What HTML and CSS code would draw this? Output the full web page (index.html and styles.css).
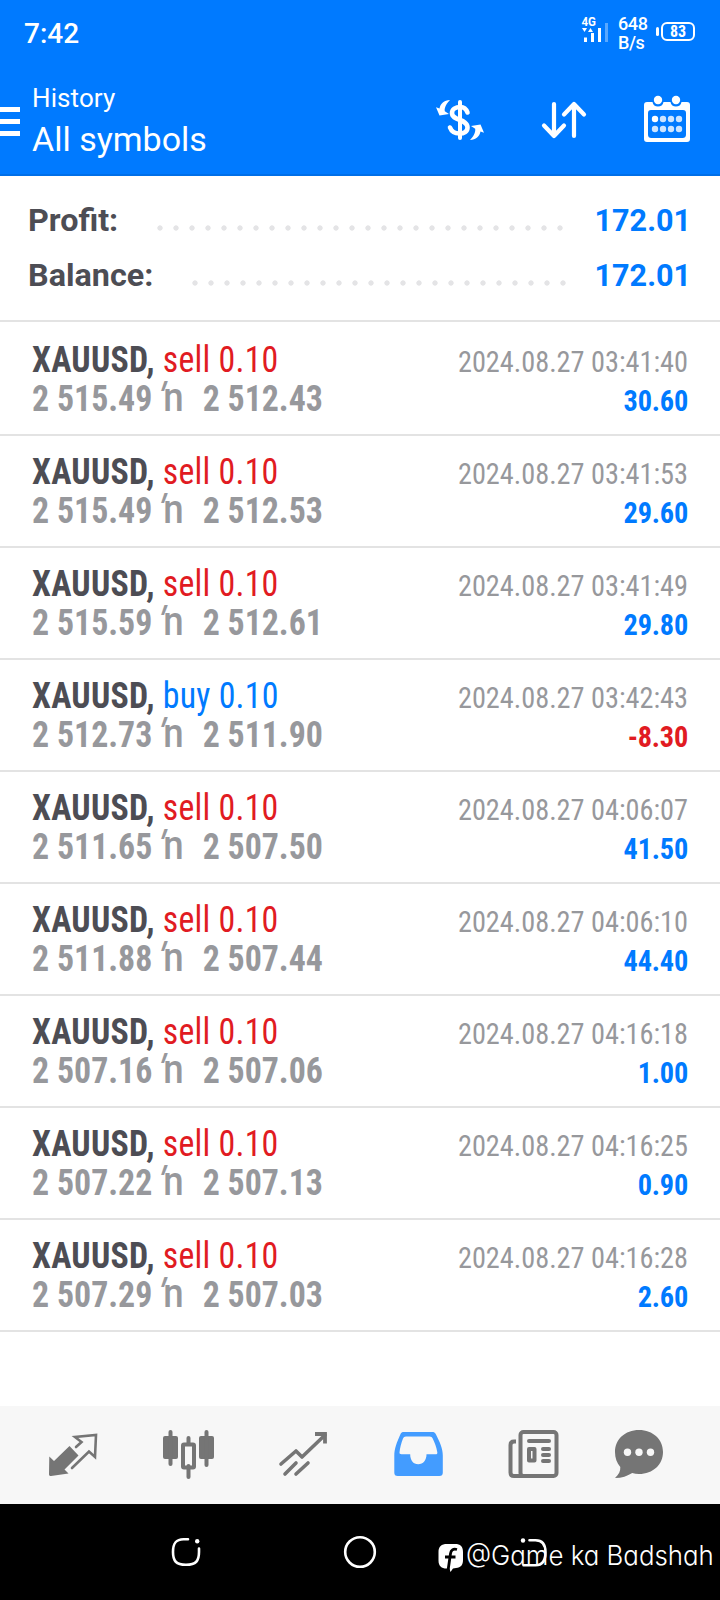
FILE: index.html
```html
<!DOCTYPE html>
<html lang="en">
<head>
<meta charset="utf-8">
<title>History</title>
<link rel="stylesheet" href="styles.css">
</head>
<body>
<div class="phone">
  <header class="top">
    <div class="status">
      <span class="clock">7:42</span>
      <svg class="signal" width="28" height="28" viewBox="0 -2 28 28">
        <text x="-.5" y="7.500" class="net" textLength="14.500" lengthAdjust="spacingAndGlyphs">4G</text>
        <path fill="#fff" d="M0 10h5l-2.500 4zM6 14h5L8.500 10zM2 19.500h3v4.500H2zM9 15h3v9H9zM16 10h3v14h-3z"/>
        <path fill="#fff" opacity=".35" d="M23 5h3v19h-3z"/>
      </svg>
      <div class="speed"><span>648</span><span>B/s</span></div>
      <div class="battery"><i></i><b>83</b></div>
    </div>
    <div class="bar">
      <div class="menu"><i></i><i></i><i></i></div>
      <div class="titles"><span class="small">History</span><span class="big">All symbols</span></div>
      <svg class="actions" width="300" height="60" viewBox="420 90 300 60" fill="none" stroke="#fff" stroke-linecap="round" stroke-linejoin="round">
        <path stroke-width="4" d="M460 102v36"/>
        <path stroke-width="4.600" d="M467.500 112.500c-1.500-4-4-5.500-7-5.500-5 0-8.500 2.200-8.500 6 0 8 15.500 5.500 15.500 14.500 0 4-3.500 6-8 6-5 0-8-2-9.500-6"/>
        <path fill="#fff" stroke="none" d="M450 100c-6 .3-9.500 3.500-10.500 8.500l-3.500-1.300 3.500 8.300 9.500-1.500-4.200-2.700c-.6-4 2.200-8.300 5.200-11.300zM470 140c6-.3 9.500-3.500 10.500-8.500l3.500 1.300-3.500-8.300-9.500 1.500 4.200 2.700c.6 4-2.200 8.300-5.200 11.300z"/>
        <path stroke-width="4.200" d="M554 104v32M544 125.500l10 10.500 10-10.500M574 136v-32M564 114.500l10-10.500 10 10.500"/>
        <path fill="#fff" stroke="none" fill-rule="evenodd" d="M647 102h5.500c.5 3 2.600 4.600 5.500 4.600s5-1.600 5.500-4.600h7c.5 3 2.600 4.600 5.500 4.600s5-1.600 5.500-4.600h5.500c2 0 3 1 3 3v34c0 2-1 3-3 3h-40c-2 0-3-1-3-3v-34c0-2 1-3 3-3zM651 110c-2 0-3 1-3 3v21c0 3 1 4 4 4h30c3 0 4-1 4-4v-21c0-2-1-3-3-3z"/>
        <g fill="#fff" stroke="none"><circle cx="658" cy="100" r="4.200"/><circle cx="676" cy="100" r="4.200"/><circle cx="655" cy="119" r="3.200"/></g>
        <g fill="#fff" stroke="none" opacity=".8"><circle cx="663" cy="119" r="3.200"/><circle cx="671" cy="119" r="3.200"/><circle cx="679" cy="119" r="3.200"/><circle cx="655" cy="129" r="3.200"/><circle cx="663" cy="129" r="3.200"/><circle cx="671" cy="129" r="3.200"/><circle cx="679" cy="129" r="3.200"/></g>
      </svg>
    </div>
  </header>

  <section class="summary">
    <div class="sum"><span class="profit-label">Profit:</span><i class="dots profit"></i><b>172.01</b></div>
    <div class="sum"><span class="balance-label">Balance:</span><i class="dots balance"></i><b>172.01</b></div>
  </section>

  <main class="list">
    <div class="row"><div class="left"><p class="deal"><b>XAUUSD,</b> <span class="sell">sell 0.10</span></p><p class="prices"><b>2 515.49</b><i><em>'</em>n</i><b>2 512.43</b></p></div><div class="right"><time>2024.08.27 03:41:40</time><b>30.60</b></div></div>
    <div class="row"><div class="left"><p class="deal"><b>XAUUSD,</b> <span class="sell">sell 0.10</span></p><p class="prices"><b>2 515.49</b><i><em>'</em>n</i><b>2 512.53</b></p></div><div class="right"><time>2024.08.27 03:41:53</time><b>29.60</b></div></div>
    <div class="row"><div class="left"><p class="deal"><b>XAUUSD,</b> <span class="sell">sell 0.10</span></p><p class="prices"><b>2 515.59</b><i><em>'</em>n</i><b>2 512.61</b></p></div><div class="right"><time>2024.08.27 03:41:49</time><b>29.80</b></div></div>
    <div class="row"><div class="left"><p class="deal"><b>XAUUSD,</b> <span class="buy">buy 0.10</span></p><p class="prices"><b>2 512.73</b><i><em>'</em>n</i><b>2 511.90</b></p></div><div class="right"><time>2024.08.27 03:42:43</time><b class="loss">-8.30</b></div></div>
    <div class="row"><div class="left"><p class="deal"><b>XAUUSD,</b> <span class="sell">sell 0.10</span></p><p class="prices"><b>2 511.65</b><i><em>'</em>n</i><b>2 507.50</b></p></div><div class="right"><time>2024.08.27 04:06:07</time><b>41.50</b></div></div>
    <div class="row"><div class="left"><p class="deal"><b>XAUUSD,</b> <span class="sell">sell 0.10</span></p><p class="prices"><b>2 511.88</b><i><em>'</em>n</i><b>2 507.44</b></p></div><div class="right"><time>2024.08.27 04:06:10</time><b>44.40</b></div></div>
    <div class="row"><div class="left"><p class="deal"><b>XAUUSD,</b> <span class="sell">sell 0.10</span></p><p class="prices"><b>2 507.16</b><i><em>'</em>n</i><b>2 507.06</b></p></div><div class="right"><time>2024.08.27 04:16:18</time><b>1.00</b></div></div>
    <div class="row"><div class="left"><p class="deal"><b>XAUUSD,</b> <span class="sell">sell 0.10</span></p><p class="prices"><b>2 507.22</b><i><em>'</em>n</i><b>2 507.13</b></p></div><div class="right"><time>2024.08.27 04:16:25</time><b>0.90</b></div></div>
    <div class="row"><div class="left"><p class="deal"><b>XAUUSD,</b> <span class="sell">sell 0.10</span></p><p class="prices"><b>2 507.29</b><i><em>'</em>n</i><b>2 507.03</b></p></div><div class="right"><time>2024.08.27 04:16:28</time><b>2.60</b></div></div>
  </main>

  <nav class="tabs">
    <svg width="720" height="98" viewBox="0 1406 720 98" fill="none" stroke="#757575" stroke-linecap="round" stroke-linejoin="round">
      <path fill="#757575" stroke="none" d="M69.500 1446l9 9.500-14 14 4 4-17.500 2.500c-1.500 0-2-.5-2-2l.3-17.500 4.700 4.500z"/>
      <path stroke-width="2.600" stroke-linejoin="miter" d="M76 1447l5.500-5-6.500-5 21-2-1 22-6-5.500-17 16.500"/>
      <g fill="#757575" stroke="none"><rect x="163" y="1436" width="15" height="23" rx="2"/><rect x="168.500" y="1430" width="4" height="36" rx="2"/><rect x="199" y="1436" width="15" height="23" rx="2"/><rect x="204.500" y="1430" width="4" height="37" rx="2"/><rect x="186.500" y="1436" width="4" height="10" rx="2"/><rect x="186.500" y="1464" width="4" height="15" rx="2"/></g>
      <rect x="183" y="1444.500" width="11" height="23" rx="1" stroke-width="4"/>
      <path stroke-width="3.600" d="M281 1464l15-13 6 6 23-22M285 1474l11-11M296 1474l12-11"/>
      <path stroke-width="3.800" stroke-linecap="butt" stroke-linejoin="miter" d="M315 1434h10v9.500"/>
      <path fill="#439cff" fill-rule="evenodd" stroke="none" d="M404 1432h28c2 0 3 .5 4 2.500 4 8 6.800 14 6.800 21v17c0 2.500-1 3.500-3.500 3.500h-41.500c-2.500 0-3.500-1-3.500-3.500v-17c0-7 2.500-13 6-21 .8-2 1.800-2.500 3.700-2.500zM406 1436.500c-1.500 0-2.500.7-3 2-1.800 5-3 9-3.500 14-.1 1.200.5 1.700 2 1.700h8.700c0 6 3 10 8 10s8.300-4 8.300-10h9c1.600 0 2-.6 1.800-2-.8-5-2.600-9.500-4.600-13.700-.6-1.300-1.400-2-3-2z"/>
      <rect x="520.500" y="1432" width="36" height="44" rx="3" stroke-width="4"/>
      <path stroke-width="4" stroke-linecap="butt" d="M516 1441.500h-2q-3.500 0-3.500 3.500v27.500q0 3.500 3.500 3.500h9"/>
      <path stroke-width="4" d="M529 1441h20M543 1449h6M543 1455h6M543 1461h6"/>
      <rect x="529" y="1449" width="5.500" height="11.500" stroke-width="4"/>
      <path fill="#757575" stroke="none" d="M639 1430c14 0 24 9.500 24 22s-10 22-24 22c-2.500 0-4.700-.3-6.800-1-5 3-10.200 5-17.200 5 4-3.500 5.500-7 5.300-11-3.500-4-5.300-9-5.300-15 0-12.500 10-22 24-22z"/>
      <g fill="#f7f7f7" stroke="none"><circle cx="627.500" cy="1452.300" r="3.700"/><circle cx="639" cy="1452.300" r="3.700"/><circle cx="650.500" cy="1452.300" r="3.700"/></g>
    </svg>
  </nav>

  <footer class="system">
    <svg width="720" height="96" viewBox="0 1504 720 96" fill="none" stroke="#fff" stroke-width="2.600" stroke-linecap="round">
      <path d="M188 1539.200h-4.500c-7.500 0-10.500 4-10.500 12.800 0 9 3 12.700 13 12.700s13-3.700 13-12.700v-3.500"/>
      <circle cx="197.200" cy="1541.300" r="2.200" fill="#fff" stroke="none"/>
      <circle cx="360" cy="1552" r="14.800"/>
      <path d="M529.500 1540.200h6c7 0 10 4 10 12s-2.500 13-10 13h-12"/>
      <circle cx="523" cy="1540.500" r="2.200" fill="#fff" stroke="none"/>
      <path fill="#fff" stroke="none" d="M447 1544h8c5.500 0 8 2.500 8 8v8c0 5-2 7.500-7 8l-3 .6-2.500 3.400-1-3.500h-3c-5 0-8-2.500-8-8v-8.500c0-5.500 3-8 8.500-8z"/>
      <path stroke="#000" stroke-width="2.800" stroke-linecap="butt" d="M457 1549.500c-4-1-6 .5-6.500 4l-2.300 16M445 1557h10.500"/>
    </svg>
    <span class="mark">@Game ka Badshah</span>
  </footer>
</div>
</body>
</html>
```
FILE: styles.css
```css
* { box-sizing: border-box; }
body { margin: 0; background: #fff; font-family: Roboto, "Liberation Sans", sans-serif; }
p { margin: 0; }
i { font-style: normal; }
svg { display: block; }
.phone { width: 720px; height: 1600px; display: flex; flex-direction: column; overflow: hidden; }

.top { height: 176px; background: #007aff; border-bottom: 2px solid #006fe8; color: #fff; }
.status { height: 64px; display: flex; align-items: flex-start; padding: 0 25px 0 24px; }
.clock { font-size: 28px; font-weight: 500; line-height: 34px; padding-top: 17px; flex: 1; }
.signal { margin: 16px 8px 0 0; overflow: visible; }
.net { fill: #fff; font: 700 12.5px Roboto, sans-serif; }
.speed { display: flex; flex-direction: column; margin-top: 14px; width: 34px; font-size: 18px; font-weight: 500; line-height: 19px; letter-spacing: -.4px; }
.battery { display: flex; align-items: center; gap: 2px; margin: 22px 0 0 4px; }
.battery i { width: 3px; height: 9px; border-radius: 2px; background: #fff; }
.battery b { width: 34px; height: 19px; border: 2px solid #fff; border-radius: 6px; font: 700 16px/15px "Roboto Condensed", Roboto, sans-serif; text-align: center; }

.bar { height: 110px; display: flex; }
.menu { width: 20px; padding-top: 43px; display: flex; flex-direction: column; gap: 7px; }
.menu i { height: 5px; background: #fff; }
.titles { flex: 1; display: flex; flex-direction: column; padding: 18px 0 0 12px; }
.small { font-size: 26px; line-height: 32px; letter-spacing: .1px; }
.big { font-size: 34px; line-height: 42px; margin-top: 4px; }
.actions { margin-top: 26px; }

.summary { height: 146px; border-bottom: 2px solid #e3e3e3; padding: 17px 29px 0 28px; }
.sum { height: 55px; display: flex; align-items: center; font-size: 32px; line-height: 55px; font-weight: 700; color: #4d4d54; }
.sum span { flex: none; white-space: nowrap; transform: scaleX(1.01); transform-origin: left; }
.profit-label { width: 129px; }
.balance-label { width: 164px; }
.sum b { margin-left: auto; color: #007aff; font-weight: 700; transform: scaleX(.955); transform-origin: right; }
.dots { flex: none; height: 6px; margin-top: 15px; background: radial-gradient(circle at 3px 3px, #e4e4e6 2.300px, transparent 3px) 0 0 / 16px 6px repeat-x; }
.profit { width: 406px; }
.balance { width: 374px; }

.list { padding-top: 2px; flex: 1; }
.row { height: 112px; border-bottom: 2px solid #e3e3e3; display: flex; justify-content: space-between; padding: 16px 32px 0; font-family: "Roboto Condensed", Roboto, sans-serif; white-space: nowrap; }
.left { font-size: 37px; line-height: 39px; color: #4d4d54; transform: scaleX(.915); transform-origin: left; }
.deal { letter-spacing: .25px; }
.left b { font-weight: 700; }
.sell { color: #e11b22; }
.buy { color: #007aff; }
.prices, .prices b { color: #97989c; }
/* the glyph pair between the open and close price */
.prices i { display: inline-block; width: 55px; padding-left: 5px; font: 500 40px/30px Roboto, sans-serif; }
.prices em { display: inline-block; width: 7px; font-style: normal; transform: skewX(-20deg); transform-origin: 50% 60%; }
.right { display: flex; flex-direction: column; align-items: flex-end; padding-top: 2px; font-size: 30px; line-height: 39px; color: #97989c; transform: scaleX(.943); transform-origin: right; }
.right b { color: #007aff; letter-spacing: -.2px; }
.right b.loss { color: #e11b22; }

.tabs { height: 98px; background: #f7f7f7; }
.system { height: 96px; background: #000; position: relative; }
.mark { position: absolute; left: 466px; top: 34px; color: #fff; font: 300 27px/36px Inter, sans-serif; font-feature-settings: "cv11"; white-space: nowrap; transform: scaleX(.957); transform-origin: left; }
```
